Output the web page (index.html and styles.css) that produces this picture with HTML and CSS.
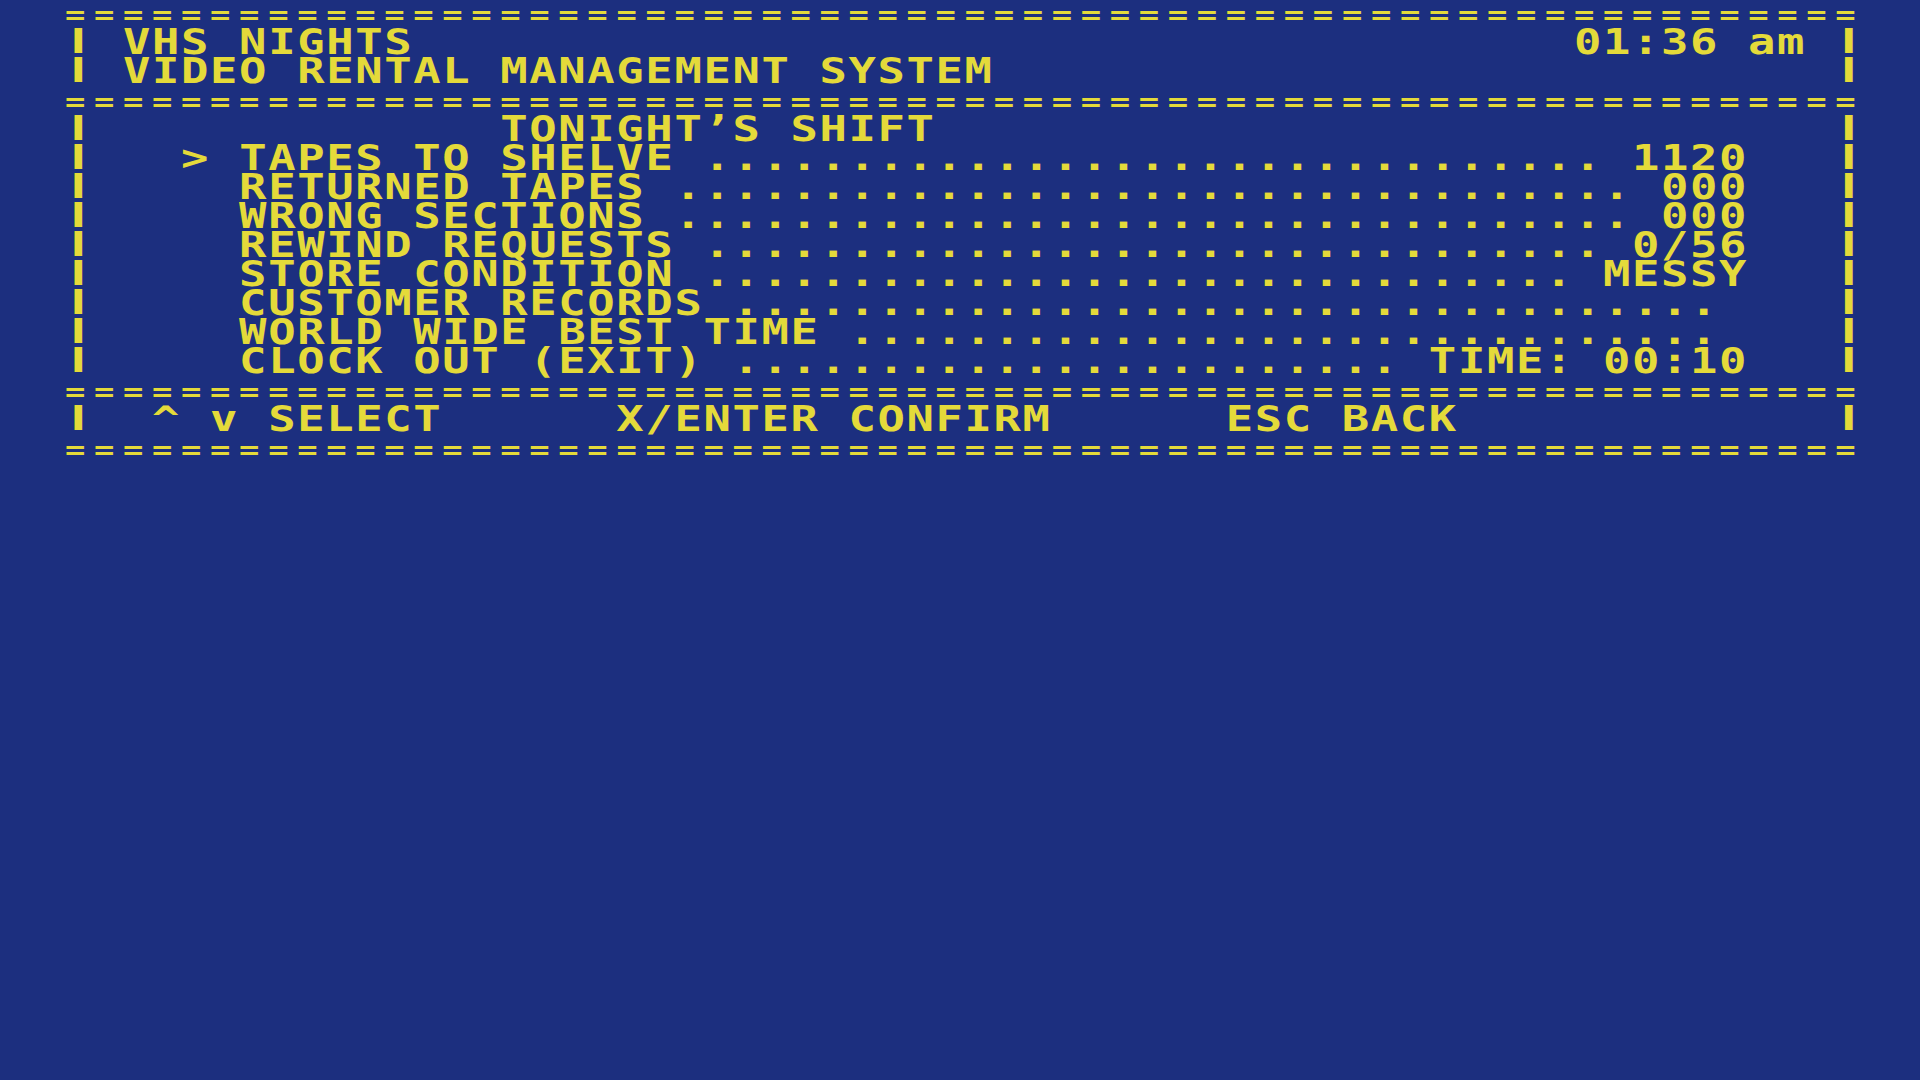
FILE: index.html
```html
<!DOCTYPE html>
<html>
   <head>
      <meta charset="utf-8"/>
      <meta name="viewport" content="width=device-width, initial-scale=1.0"/>
      <title>VHS Nights</title>
      <link rel="stylesheet" href="styles.css">
   </head>
   <body>
      <!--the whole terminal: 62 columns, 16 rows-->
      <div class="screen">
         <!--title block-->
         <div class="ln rule">==============================================================</div>
         <div class="ln"><span class="bar">|</span> VHS NIGHTS                                        01:36 am <span class="bar">|</span></div>
         <div class="ln"><span class="bar">|</span> VIDEO RENTAL MANAGEMENT SYSTEM                             <span class="bar">|</span></div>
         <div class="ln rule">==============================================================</div>
         <!--shift menu-->
         <div class="ln"><span class="bar">|</span>              TONIGHT’S SHIFT                               <span class="bar">|</span></div>
         <div class="ln"><span class="bar">|</span>   <span class="cursor">&gt;</span> TAPES TO SHELVE ............................... 1120   <span class="bar">|</span></div>
         <div class="ln"><span class="bar">|</span>     RETURNED TAPES ................................. 000   <span class="bar">|</span></div>
         <div class="ln"><span class="bar">|</span>     WRONG SECTIONS ................................. 000   <span class="bar">|</span></div>
         <div class="ln"><span class="bar">|</span>     REWIND REQUESTS ............................... 0/56   <span class="bar">|</span></div>
         <div class="ln"><span class="bar">|</span>     STORE CONDITION .............................. MESSY   <span class="bar">|</span></div>
         <div class="ln"><span class="bar">|</span>     CUSTOMER RECORDS ..................................    <span class="bar">|</span></div>
         <div class="ln"><span class="bar">|</span>     WORLD WIDE BEST TIME ..............................    <span class="bar">|</span></div>
         <div class="ln"><span class="bar">|</span>     CLOCK OUT (EXIT) ....................... TIME: 00:10   <span class="bar">|</span></div>
         <!--key help-->
         <div class="ln rule">==============================================================</div>
         <div class="ln"><span class="bar">|</span>  ^ v SELECT      X/ENTER CONFIRM      ESC BACK             <span class="bar">|</span></div>
         <div class="ln rule">==============================================================</div>
      </div>
   </body>
</html>
```

FILE: styles.css
```css
html, body {
margin: 0;
overflow: hidden;
background-color: #1c2f7f;
}
/* one cell = 1ch + letter-spacing, stretched wide like the old 8x8 font */
.screen {
width: 1384px;
margin: -1px 0 0 65px;
color: #e4da3a;
font-family: "DejaVu Sans Mono", monospace;
font-weight: bold;
font-size: 35px;
line-height: 29px;
letter-spacing: 1.25px;
transform: scaleX(1.3);
transform-origin: 0 0;
}
.ln {
height: 29px;
white-space: pre;
}
/* smaller '=' so each one stands apart, same cell width */
.rule {
box-sizing: border-box;
padding-top: 4px;
font-size: 26px;
line-height: 25px;
letter-spacing: 6.67px;
}
/* side borders are short dashes, not a solid line */
.bar {
display: inline-block;
transform: scale(1.5, 0.72);
transform-origin: 50% 0;
}
.cursor {
display: inline-block;
}
```
